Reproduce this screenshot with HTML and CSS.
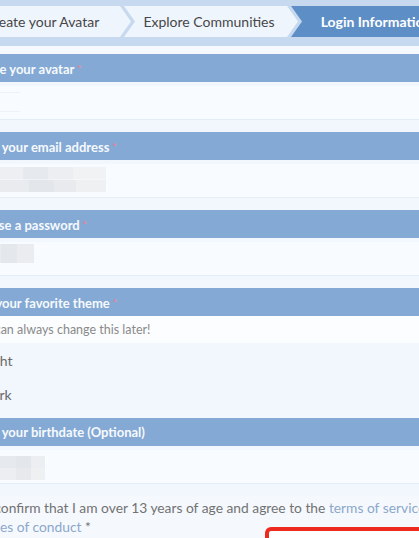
FILE: index.html
```html
<!DOCTYPE html>
<html lang="en">
<head>
<meta charset="utf-8">
<title>Sign up – Login Information</title>
<link rel="stylesheet" href="styles.css">
</head>
<body>
<div class="page">
  <nav class="steps">
    <div class="step">Create your Avatar</div>
    <div class="step">Explore Communities</div>
    <div class="step is-active">Login Information</div>
  </nav>
  <form class="form">
    <section class="field">
      <h2 class="field-head">Create your avatar <span class="req">*</span></h2>
      <div class="field-body">
        <div class="input input-avatar"><span class="blur blur-avatar"></span></div>
      </div>
    </section>
    <section class="field">
      <h2 class="field-head">Enter your email address <span class="req">*</span></h2>
      <div class="field-body">
        <div class="input"><span class="blur blur-email"></span></div>
      </div>
    </section>
    <section class="field">
      <h2 class="field-head">Choose a password <span class="req">*</span></h2>
      <div class="field-body">
        <div class="input"><span class="blur blur-password"></span></div>
      </div>
    </section>
    <section class="field">
      <h2 class="field-head">Pick your favorite theme <span class="req">*</span></h2>
      <p class="hint">You can always change this later!</p>
      <div class="options">
        <label class="option"><span class="radio"></span>Light</label>
        <label class="option"><span class="radio"></span>Dark</label>
      </div>
    </section>
    <section class="field">
      <h2 class="field-head">Enter your birthdate (Optional)</h2>
      <div class="field-body">
        <div class="input"><span class="blur blur-date"></span></div>
      </div>
    </section>
    <p class="consent">I confirm that I am over 13 years of age and agree to the <a class="link">terms of service</a> and <a class="link">rules of conduct</a> *</p>
  </form>
  <div class="highlight"></div>
</div>
</body>
</html>
```
FILE: styles.css
```css
body {
  margin: 0;
  overflow: hidden;
  background: #f2f7fd;
  font-family: Lato, "Noto Sans", sans-serif;
  color: #666;
}

.page {
  position: relative;
  margin-left: -50px;
  width: 560px;
}

/* step bar */
.steps {
  display: flex;
  background: #c7d9ef;
  padding: 6px 0 9px 7px;
}

.step {
  flex: none;
  box-sizing: border-box;
  width: 174px;
  height: 31px;
  padding: 0 11px;
  margin-left: -7px;
  display: flex;
  align-items: center;
  justify-content: center;
  white-space: nowrap;
  background: #eff5fd;
  color: #474747;
  font-size: 14px;
  clip-path: polygon(0 0, calc(100% - 11px) 0, 100% 50%, calc(100% - 11px) 100%, 0 100%, 11px 50%);
}

.step:first-child {
  margin-left: 0;
  padding-right: 15px;
  clip-path: polygon(0 0, calc(100% - 11px) 0, 100% 50%, calc(100% - 11px) 100%, 0 100%);
}

.step:nth-child(2) {
  padding-left: 7px;
}

.step.is-active {
  padding-left: 7px;
  background: #5e8ec6;
  color: #fff;
  font-weight: 700;
}

/* form */
.form {
  background: #f5f9fe;
  padding-top: 8px;
}

.field-head {
  margin: 0;
  height: 28px;
  line-height: 28px;
  padding-left: 18px;
  background: #84a9d4;
  color: #f6f9fd;
  font-size: 13px;
  font-weight: 700;
  white-space: nowrap;
}

.req {
  color: #e8849a;
  font-size: 10px;
  vertical-align: 2px;
}

.field-body {
  background: #f2f7fd;
  padding: 4px 0 12px;
}

.input {
  display: flex;
  align-items: flex-start;
  box-sizing: border-box;
  height: 34px;
  background: #f8fbff;
  border-bottom: 1px solid #e4ecf6;
  padding-left: 18px;
}

.blur {
  display: block;
  flex: none;
}

.blur-avatar {
  width: 52px;
  height: 20px;
  margin-top: 6px;
  background:
    linear-gradient(#eef2f7, #eef2f7) top / 100% 1px no-repeat,
    linear-gradient(#eef2f7, #eef2f7) bottom / 100% 1px no-repeat;
}

.blur-email {
  width: 138px;
  height: 25px;
  margin-top: 3px;
  background:
    linear-gradient(90deg, #e9ebef 0 22%, #edeff2 22% 40%, #e6e9ed 40% 58%, #eceef1 58% 76%, #f1f2f4 76% 100%) top / 100% 50% no-repeat,
    linear-gradient(90deg, #e4e7eb 0 22%, #e9ebee 22% 44%, #e3e6ea 44% 62%, #e8eaee 62% 78%, #eff0f2 78% 100%) bottom / 100% 50% no-repeat;
}

.blur-password {
  width: 66px;
  height: 19px;
  margin-top: 2px;
  background: linear-gradient(90deg, #e9ebef 0 50%, #e4e7eb 50% 75%, #eaecef 75% 100%);
}

.blur-date {
  width: 77px;
  height: 24px;
  margin-top: 6px;
  background:
    linear-gradient(90deg, #eceef1 0 42%, #e6e9ed 42% 62%, #e3e6ea 62% 82%, #eceef1 82% 100%) top / 100% 50% no-repeat,
    linear-gradient(90deg, #e8eaee 0 42%, #eceef1 42% 62%, #e7e9ed 62% 82%, #eff0f2 82% 100%) bottom / 100% 50% no-repeat;
}

.hint {
  margin: 0;
  height: 27px;
  line-height: 27px;
  padding-left: 21px;
  background: #fcfdff;
  color: #8a8a8a;
  font-size: 12.5px;
  white-space: nowrap;
}

.options {
  background: #f2f7fd;
  padding-bottom: 7px;
}

.option {
  display: flex;
  align-items: center;
  gap: 6px;
  height: 34px;
  padding-left: 11px;
  font-size: 14px;
  color: #6a6a6a;
}

.radio {
  width: 13px;
  height: 13px;
  border: 1px solid #999;
  border-radius: 50%;
  background: #fff;
}

.consent {
  margin: 0;
  padding: 2px 30px 20px 34px;
  text-indent: 3px;
  line-height: 19px;
  font-size: 13.8px;
  color: #727272;
}

.link {
  color: #8ca7c9;
}

.highlight {
  position: absolute;
  left: 315px;
  top: 527px;
  width: 200px;
  height: 60px;
  border: 4px solid #ee2a1e;
  border-radius: 6px;
  background: #fff;
}
```
